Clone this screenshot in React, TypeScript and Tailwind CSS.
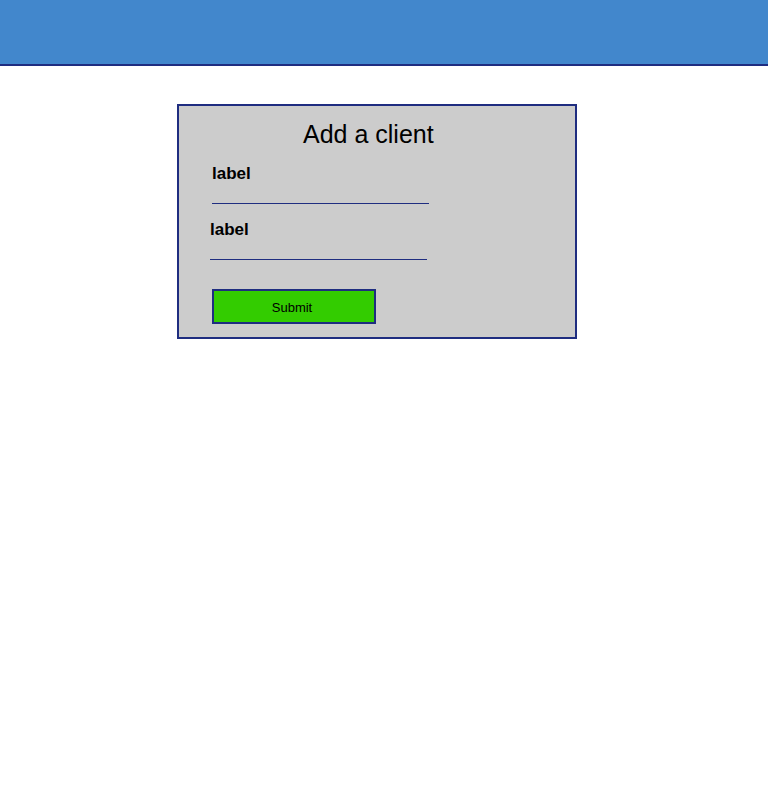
import React from "react";

export default function App() {
  return (
    <div className="min-h-[800px] bg-white text-black" style={{ fontFamily: '"Liberation Sans", Arial, sans-serif' }}>
      <header className="h-[66px] bg-[#4287cc] border-b-2 border-[#1f2d80]" />
      <div className="mt-[38px] ml-[177px] w-[400px] h-[235px] border-2 border-[#1f2d80] bg-[#cccccc] box-border">
        <h1 className="pt-[14px] ml-[124px] text-[25px] leading-[29px] font-normal">Add a client</h1>
        <label className="block mt-[15px] ml-[33px] text-[17px] leading-[20px] font-bold">label</label>
        <div className="ml-[33px] w-[217px] h-[20px] border-b border-[#1f2d80] box-border" />
        <label className="block mt-[16px] ml-[31px] text-[17px] leading-[20px] font-bold">label</label>
        <div className="ml-[31px] w-[217px] h-[20px] border-b border-[#1f2d80] box-border" />
        <button className="mt-[29px] ml-[33px] w-[164px] h-[35px] border-2 border-[#1f2d80] bg-[#33cc00] text-[13px] text-black box-border flex items-center justify-center pr-[4px] pt-[2px]">
          Submit
        </button>
      </div>
    </div>
  );
}
